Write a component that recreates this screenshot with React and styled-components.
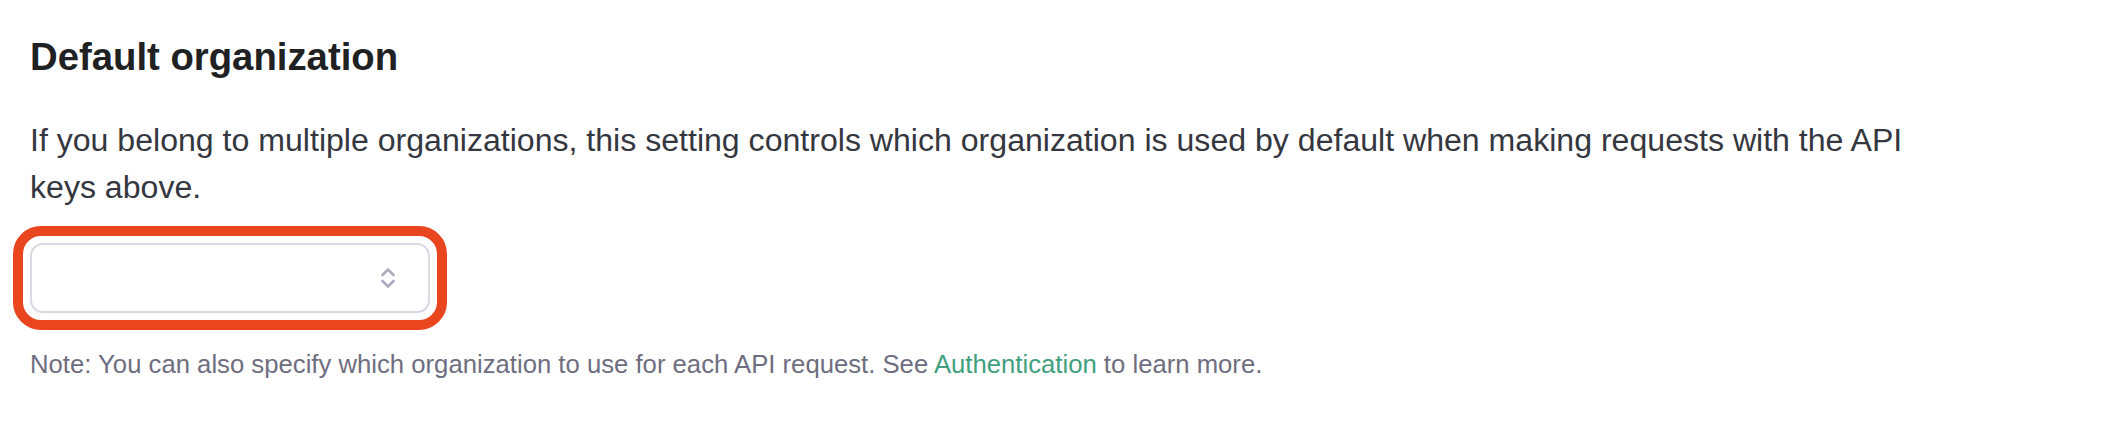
import styled, { createGlobalStyle } from "styled-components";

const GlobalStyle = createGlobalStyle`
  html, body {
    margin: 0;
    padding: 0;
    background: #ffffff;
  }
  body {
    font-family: "Liberation Sans", Arial, sans-serif;
    -webkit-font-smoothing: antialiased;
  }
`;

function ChevronUpDown() {
  return (
    <svg width="18" height="26" viewBox="0 0 18 26" fill="none">
      <path
        d="M3.5 10 L9 4.5 L14.5 10"
        stroke="#acacbe"
        strokeWidth="2.6"
        strokeLinecap="round"
        strokeLinejoin="round"
      />
      <path
        d="M3.5 16 L9 21.5 L14.5 16"
        stroke="#acacbe"
        strokeWidth="2.6"
        strokeLinecap="round"
        strokeLinejoin="round"
      />
    </svg>
  );
}

export default function App() {
  return (
    <>
      <GlobalStyle />
      <Section>
        <Heading>Default organization</Heading>
        <Description>
          If you belong to multiple organizations, this setting controls which
          organization is used by default when making requests with the API
          keys above.
        </Description>
        <Highlight>
          <Select>
            <ChevronUpDown />
          </Select>
        </Highlight>
        <Note>
          Note: You can also specify which organization to use for each API
          request. See <Link href="#">Authentication</Link> to learn more.
        </Note>
      </Section>
    </>
  );
}

const Section = styled.section`
  padding: 34px 30px 0 30px;
  display: flex;
  flex-direction: column;
  align-items: flex-start;
`;

const Heading = styled.h2`
  margin: 0;
  font-size: 38.3px;
  line-height: 46px;
  font-weight: 700;
  color: #202123;
`;

const Description = styled.p`
  margin: 37px 0 0 0;
  max-width: 1920px;
  font-size: 32.1px;
  line-height: 47px;
  color: #353740;
`;

const Highlight = styled.div`
  margin: 15px 0 0 -17px;
  padding: 7px;
  border: 10px solid #e9451f;
  border-radius: 28px;
  display: flex;
`;

const Select = styled.div`
  box-sizing: border-box;
  width: 400px;
  height: 70px;
  border: 2px solid #d9d9e3;
  border-radius: 13px;
  background: #ffffff;
  box-shadow: 0 1px 2px rgba(0, 0, 0, 0.04);
  display: flex;
  align-items: center;
  justify-content: flex-end;
  padding-right: 31px;
`;

const Note = styled.p`
  margin: 16px 0 0 0;
  font-size: 25.7px;
  line-height: 36px;
  color: #6e6e80;
`;

const Link = styled.a`
  color: #3fa07f;
  text-decoration: none;
`;
